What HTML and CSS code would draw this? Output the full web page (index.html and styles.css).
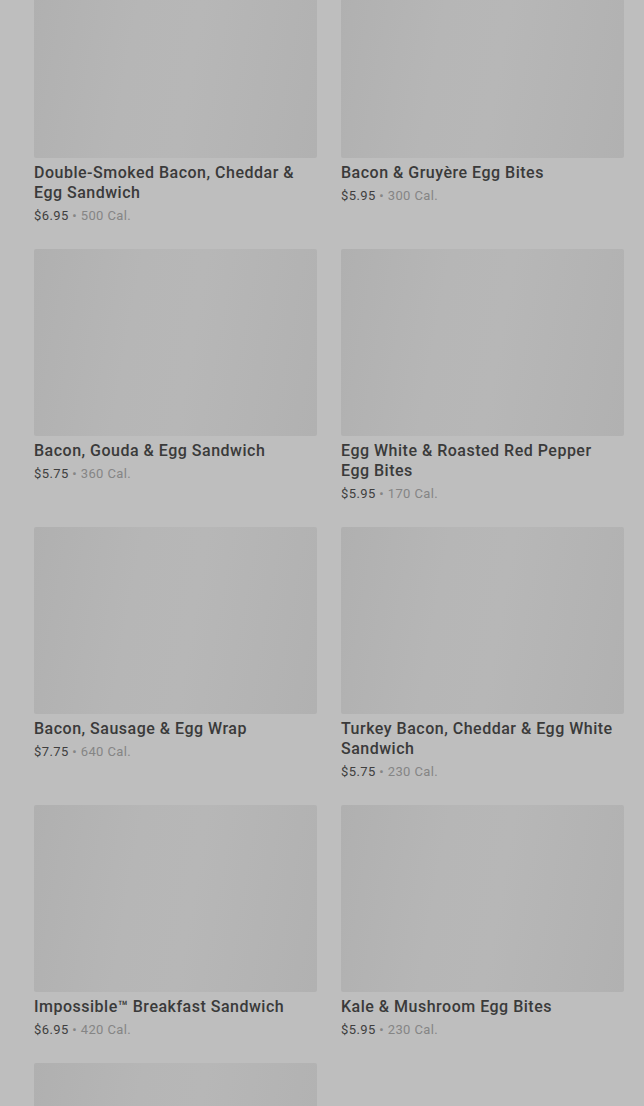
FILE: index.html
```html
<!DOCTYPE html>
<html lang="en">
<head>
    <meta charset="UTF-8">
    <meta name="viewport" content="width=device-width, initial-scale=1.0">
    <title>Breakfast</title>
    <link rel="stylesheet" href="styles.css">
</head>
<body>

    <div class="menu-grid">
        <div class="menu-item">
            <div class="item-image"></div>
            <h3 class="item-name">Double-Smoked Bacon, Cheddar &amp; Egg Sandwich</h3>
            <p class="item-meta"><span class="price">$6.95</span> <span class="cal">• 500 Cal.</span></p>
        </div>
        <div class="menu-item">
            <div class="item-image"></div>
            <h3 class="item-name">Bacon &amp; Gruyère Egg Bites</h3>
            <p class="item-meta"><span class="price">$5.95</span> <span class="cal">• 300 Cal.</span></p>
        </div>
        <div class="menu-item">
            <div class="item-image"></div>
            <h3 class="item-name">Bacon, Gouda &amp; Egg Sandwich</h3>
            <p class="item-meta"><span class="price">$5.75</span> <span class="cal">• 360 Cal.</span></p>
        </div>
        <div class="menu-item">
            <div class="item-image"></div>
            <h3 class="item-name">Egg White &amp; Roasted Red Pepper Egg Bites</h3>
            <p class="item-meta"><span class="price">$5.95</span> <span class="cal">• 170 Cal.</span></p>
        </div>
        <div class="menu-item">
            <div class="item-image"></div>
            <h3 class="item-name">Bacon, Sausage &amp; Egg Wrap</h3>
            <p class="item-meta"><span class="price">$7.75</span> <span class="cal">• 640 Cal.</span></p>
        </div>
        <div class="menu-item">
            <div class="item-image"></div>
            <h3 class="item-name">Turkey Bacon, Cheddar &amp; Egg White Sandwich</h3>
            <p class="item-meta"><span class="price">$5.75</span> <span class="cal">• 230 Cal.</span></p>
        </div>
        <div class="menu-item">
            <div class="item-image"></div>
            <h3 class="item-name">Impossible™ Breakfast Sandwich</h3>
            <p class="item-meta"><span class="price">$6.95</span> <span class="cal">• 420 Cal.</span></p>
        </div>
        <div class="menu-item">
            <div class="item-image"></div>
            <h3 class="item-name">Kale &amp; Mushroom Egg Bites</h3>
            <p class="item-meta"><span class="price">$5.95</span> <span class="cal">• 230 Cal.</span></p>
        </div>
        <div class="menu-item">
            <div class="item-image"></div>
        </div>
    </div>

</body>
</html>
```

FILE: styles.css
```css
body {
    margin: 0;
    background-color: #bebebe;
    font-family: 'Roboto', 'Liberation Sans', sans-serif;
    color: #3b3b3b;
    overflow: hidden;
}

.menu-grid {
    display: grid;
    grid-template-columns: 283px 283px;
    column-gap: 24px;
    row-gap: 23px;
    padding: 0 20px 0 34px;
    margin-top: -29px; /* list is scrolled a little */
}

.menu-item {
    display: flex;
    flex-direction: column;
}

.item-image {
    height: 187px;
    border-radius: 2px;
    background: linear-gradient(100deg, #b0b0b0 0%, #b6b6b6 35%, #b7b7b7 55%, #b1b1b1 100%);
}

.item-name {
    margin: 5px 0 0;
    font-size: 16px;
    line-height: 20px;
    font-weight: 500;
    letter-spacing: 0.5px;
    color: #3a3a3a;
}

.item-meta {
    margin: 3px 0 0;
    font-size: 13px;
    line-height: 20px;
    letter-spacing: 0.4px;
}

.price {
    color: #3f3f3f;
}

.cal {
    color: #858585;
}
```
